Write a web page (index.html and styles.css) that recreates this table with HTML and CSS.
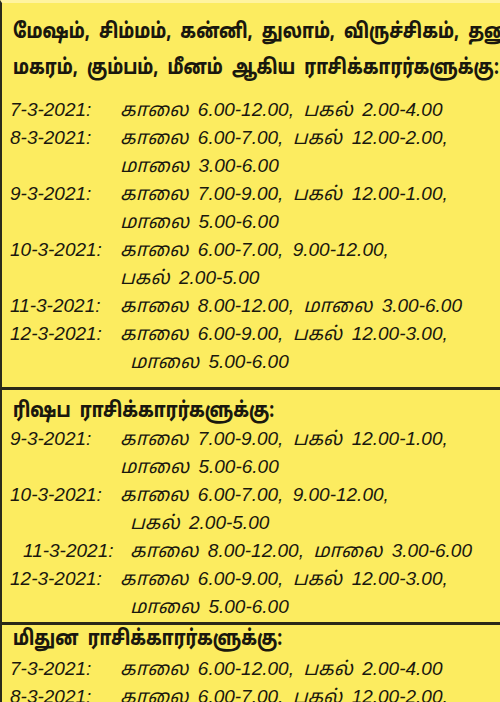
FILE: index.html
```html
<!DOCTYPE html>
<html lang="ta">
<head>
<meta charset="utf-8">
<link rel="stylesheet" href="styles.css">
</head>
<body>
<div class="page">
  <section class="block first">
    <h2 class="head"><span class="squeeze">மேஷம், சிம்மம், கன்னி, துலாம், விருச்சிகம், தனுசு,<br>மகரம், கும்பம், மீனம் ஆகிய ராசிக்காரர்களுக்கு:</span></h2>
    <div class="rows">
      <div class="row"><span class="date">7-3-2021:</span><span class="times">காலை 6.00-12.00, பகல் 2.00-4.00</span></div>
      <div class="row"><span class="date">8-3-2021:</span><span class="times">காலை 6.00-7.00, பகல் 12.00-2.00,</span></div>
      <div class="row"><span class="date"></span><span class="times">மாலை 3.00-6.00</span></div>
      <div class="row"><span class="date">9-3-2021:</span><span class="times">காலை 7.00-9.00, பகல் 12.00-1.00,</span></div>
      <div class="row"><span class="date"></span><span class="times">மாலை 5.00-6.00</span></div>
      <div class="row"><span class="date">10-3-2021:</span><span class="times">காலை 6.00-7.00, 9.00-12.00,</span></div>
      <div class="row"><span class="date"></span><span class="times">பகல் 2.00-5.00</span></div>
      <div class="row"><span class="date">11-3-2021:</span><span class="times">காலை 8.00-12.00, மாலை 3.00-6.00</span></div>
      <div class="row"><span class="date">12-3-2021:</span><span class="times">காலை 6.00-9.00, பகல் 12.00-3.00,</span></div>
      <div class="row"><span class="date"></span><span class="times indent">மாலை 5.00-6.00</span></div>
    </div>
  </section>
  <section class="block second">
    <h2 class="head"><span class="squeeze">ரிஷப ராசிக்காரர்களுக்கு:</span></h2>
    <div class="rows">
      <div class="row"><span class="date">9-3-2021:</span><span class="times">காலை 7.00-9.00, பகல் 12.00-1.00,</span></div>
      <div class="row"><span class="date"></span><span class="times">மாலை 5.00-6.00</span></div>
      <div class="row"><span class="date">10-3-2021:</span><span class="times">காலை 6.00-7.00, 9.00-12.00,</span></div>
      <div class="row"><span class="date"></span><span class="times indent">பகல் 2.00-5.00</span></div>
      <div class="row shifted"><span class="date">11-3-2021:</span><span class="times">காலை 8.00-12.00, மாலை 3.00-6.00</span></div>
      <div class="row"><span class="date">12-3-2021:</span><span class="times">காலை 6.00-9.00, பகல் 12.00-3.00,</span></div>
      <div class="row"><span class="date"></span><span class="times indent">மாலை 5.00-6.00</span></div>
    </div>
  </section>
  <section class="block third">
    <h2 class="head"><span class="squeeze">மிதுன ராசிக்காரர்களுக்கு:</span></h2>
    <div class="rows">
      <div class="row"><span class="date">7-3-2021:</span><span class="times">காலை 6.00-12.00, பகல் 2.00-4.00</span></div>
      <div class="row"><span class="date">8-3-2021:</span><span class="times">காலை 6.00-7.00, பகல் 12.00-2.00,</span></div>
    </div>
  </section>
</div>
</body>
</html>
```

FILE: styles.css
```css
html, body {
  margin: 0;
  padding: 0;
  background: #fcec60;
}
.page {
  width: 500px;
  height: 702px;
  overflow: hidden;
  border-left: 2px solid #2a2a1a;
  border-top: 3px solid #fff4a0;
  box-sizing: border-box;
  background: #fcec60;
  color: #1a180e;
  font-family: "Noto Sans Tamil", "Lohit Tamil", "Noto Serif Tamil", "Noto Sans", sans-serif;
}
.block {
  border-bottom: 3px solid #2a2818;
  padding: 0 0 0 8px;
}
.block.first {
  padding-bottom: 11px;
}
.block.second {
  padding-bottom: 1px;
}
.block:last-child {
  border-bottom: none;
}
.head {
  margin: 0;
  font-size: 21px;
  font-weight: 800;
  word-spacing: 6px;
  line-height: 26px;
  white-space: nowrap;
  padding-left: 3px;
}
.squeeze {
  display: inline-block;
  transform: scaleX(0.8);
  transform-origin: left center;
}
.first .head {
  line-height: 36px;
  padding-top: 12px;
  padding-bottom: 9px;
}
.second .head {
  padding-top: 9px;
}
.third .head {
  padding-top: 2px;
  padding-bottom: 2px;
}
.rows {
  display: flex;
  flex-direction: column;
}
.row {
  display: flex;
  align-items: baseline;
  height: 28px;
  line-height: 28px;
  white-space: nowrap;
}
.date {
  width: 110px;
  flex: none;
  font-family: "Liberation Sans", Arial, sans-serif;
  font-style: italic;
  font-size: 19px;
}
.times {
  font-family: "Liberation Sans", "Noto Sans Tamil", "Lohit Tamil", sans-serif;
  font-style: italic;
  font-size: 19px;
  word-spacing: 4px;
}
.indent {
  padding-left: 10px;
}
.shifted .date {
  padding-left: 13px;
  width: 97px;
}
.shifted .times {
  padding-left: 10px;
}
```
